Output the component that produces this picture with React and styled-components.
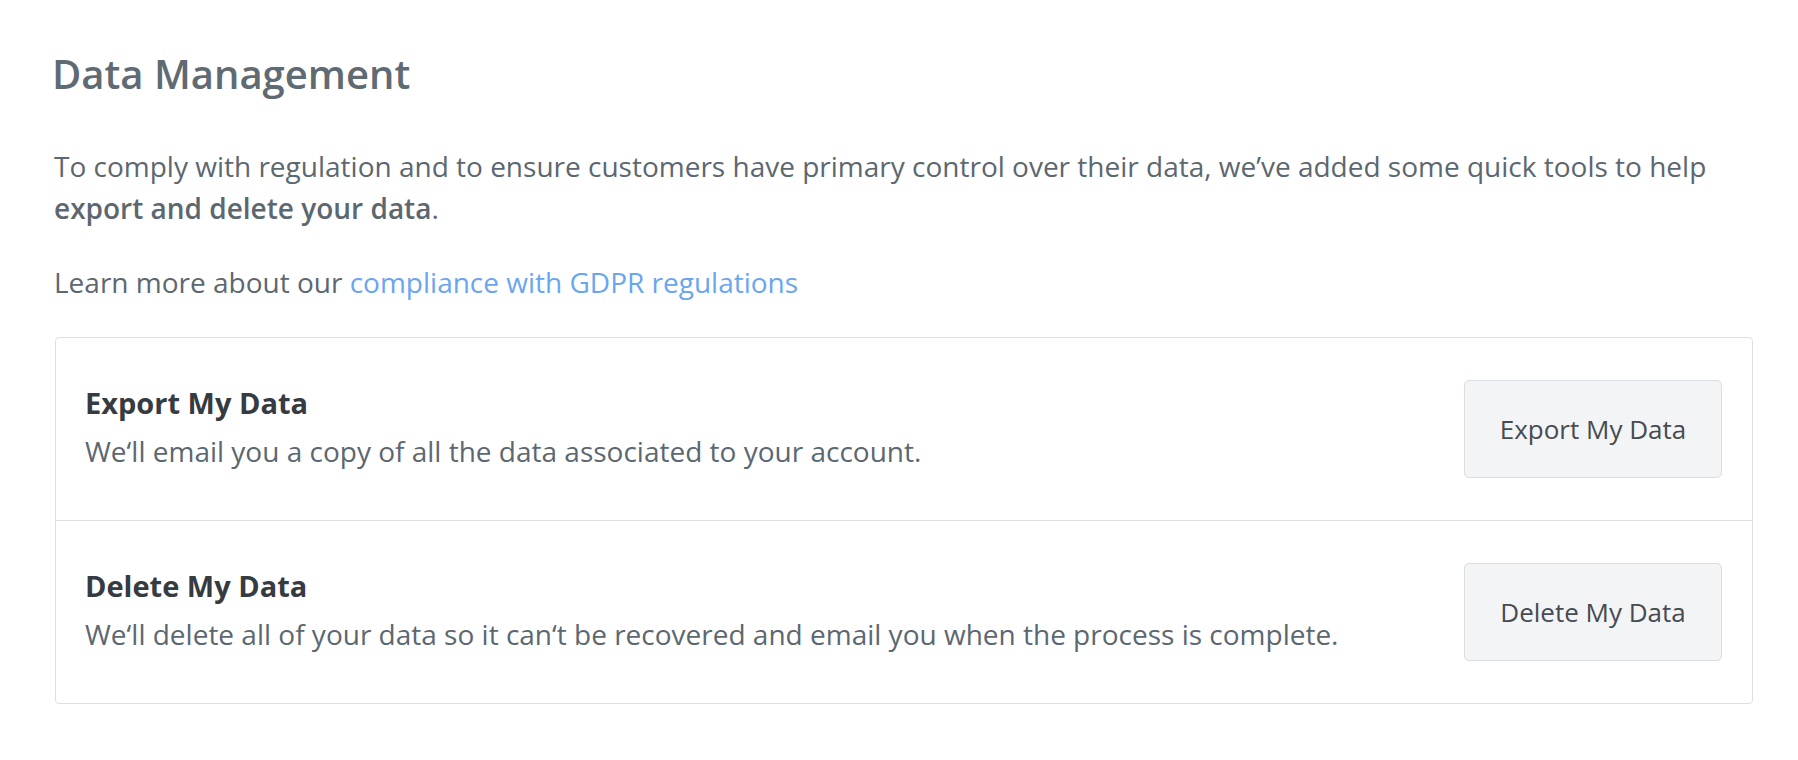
import React from "react";
import styled, { createGlobalStyle } from "styled-components";

const Global = createGlobalStyle`
  html, body { margin: 0; padding: 0; background: #ffffff; }
  body { font-family: "Open Sans", "Noto Sans", sans-serif; -webkit-font-smoothing: antialiased; }
  * { box-sizing: border-box; }
`;

const Page = styled.main`
  padding: 50px 45px 40px 55px;
`;

const Title = styled.h1`
  margin: 0 0 47px -3px;
  font-size: 40px;
  line-height: 48px;
  font-weight: 600;
  color: #5f6a72;
`;

const Para = styled.p`
  margin: 0 0 ${(p) => p.$gap || 0}px -1px;
  font-size: 28px;
  line-height: 42px;
  color: #5c6770;
  strong { font-weight: 600; }
`;

const Link = styled.a`
  color: #6aa6ee;
  text-decoration: none;
`;

const Card = styled.section`
  border: 1px solid #dde0e4;
  border-radius: 4px;
  display: flex;
  flex-direction: column;
`;

const Row = styled.div`
  display: flex;
  align-items: center;
  justify-content: space-between;
  padding: 41px 30px 41px 29px;
  & + & { border-top: 1px solid #dde0e4; }
`;

const Info = styled.div`
  display: flex;
  flex-direction: column;
  margin-bottom: ${(p) => p.$shift || 0}px;
`;

const RowTitle = styled.h2`
  margin: 0;
  font-size: 29px;
  line-height: 48px;
  font-weight: 700;
  color: #353b41;
`;

const RowText = styled.p`
  margin: 0;
  font-size: 28px;
  line-height: 48px;
  color: #5c6770;
`;

const Button = styled.button`
  flex: none;
  width: 258px;
  height: 98px;
  border: 1px solid #dadde1;
  border-radius: 5px;
  background: #f3f4f6;
  font-family: inherit;
  font-size: 26px;
  color: #464b51;
  padding: 0;
  cursor: pointer;
`;

const rows = [
  {
    title: "Export My Data",
    text: "We\u2018ll email you a copy of all the data associated to your account.",
    button: "Export My Data",
  },
  {
    title: "Delete My Data",
    text: "We\u2018ll delete all of your data so it can\u2018t be recovered and email you when the process is complete.",
    button: "Delete My Data",
  },
];

export default function App() {
  return (
    <Page>
      <Global />
      <Title>Data Management</Title>
      <Para $gap={32}>
        To comply with regulation and to ensure customers have primary control over their data, we{"\u2019"}ve added some quick tools to help{" "}
        <strong>export and delete your data</strong>.
      </Para>
      <Para $gap={34}>
        Learn more about our <Link href="#">compliance with GDPR regulations</Link>
      </Para>
      <Card>
        {rows.map((r) => (
          <Row key={r.title}>
            <Info $shift={4}>
              <RowTitle>{r.title}</RowTitle>
              <RowText>{r.text}</RowText>
            </Info>
            <Button>{r.button}</Button>
          </Row>
        ))}
      </Card>
    </Page>
  );
}
